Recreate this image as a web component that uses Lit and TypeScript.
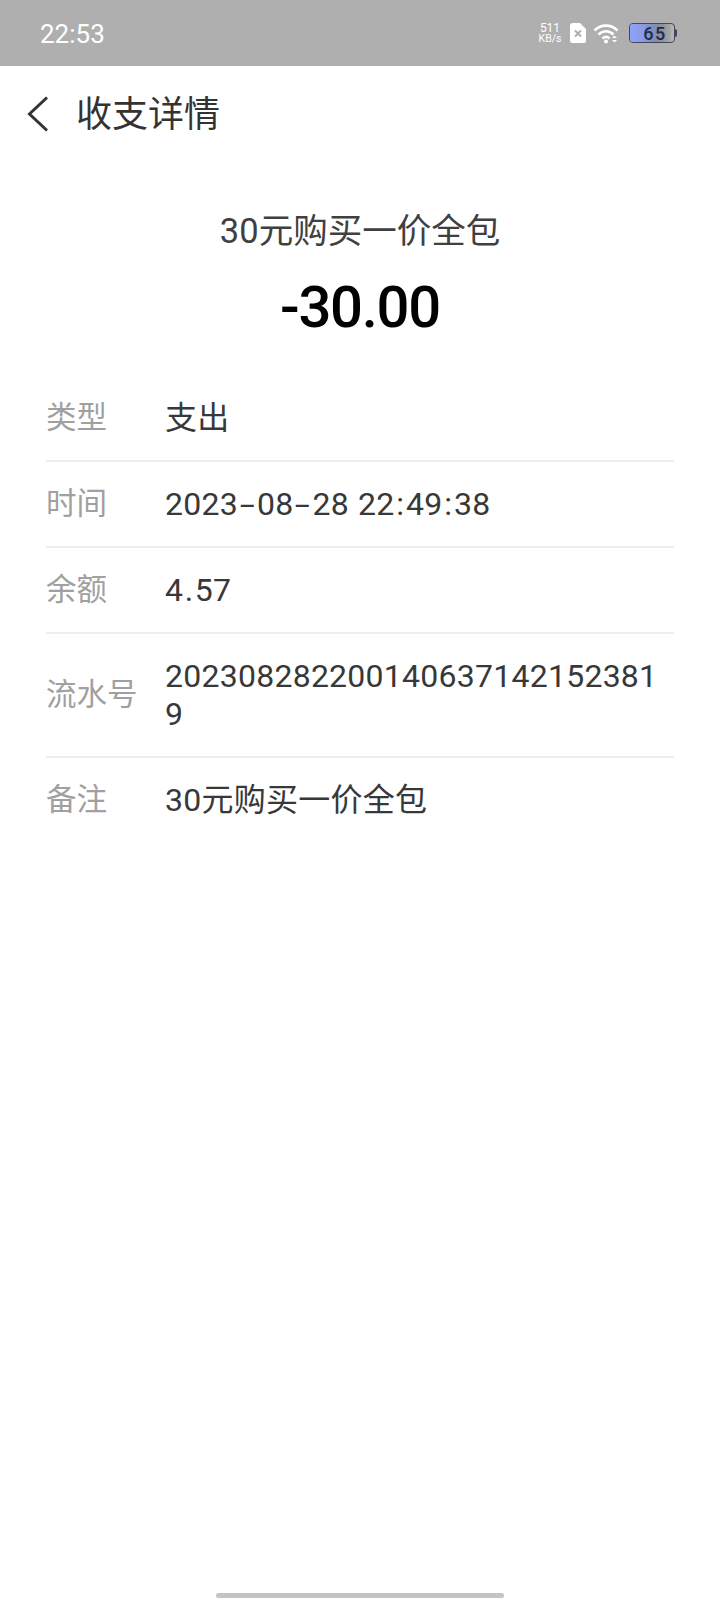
import { LitElement, css, html, svg } from 'lit'
import { customElement } from 'lit/decorators.js'

const rows = [
  { label: '类型', value: '支出' },
  { label: '时间', value: '2023-08-28 22:49:38' },
  { label: '余额', value: '4.57' },
  { label: '流水号', value: '2023082822001406371421523819' },
  { label: '备注', value: '30元购买一价全包' },
]

const wifi = svg`
  <path d="M1.5 8.5C8 2 18 2 24.5 8.5" />
  <path d="M5.5 12.5C10 8.2 16 8.2 20.5 12.5" />
  <path d="M9.5 16.5C11.8 14.4 14.2 14.4 16.5 16.5" />`

// the phone's font has much wider punctuation than Roboto
const spaced = (text: string) =>
  text.split(/([-:.])/).map(part => {
    if (part === '-') return html`<span class="dash">-</span>`
    if (part === ':' || part === '.') return html`<span class="punct">${part}</span>`
    return part
  })

@customElement('app-root')
export class AppRoot extends LitElement {
  render() {
    return html`
      <div class="status">
        <span class="clock">22:53</span>
        <div class="indicators">
          <div class="speed"><span>511</span><span class="unit">KB/s</span></div>
          <svg class="sim" width="16" height="20" viewBox="0 0 16 20">
            <path d="M2.5 0H10L16 6V17.5A2.5 2.5 0 0 1 13.5 20H2.5A2.5 2.5 0 0 1 0 17.5V2.5A2.5 2.5 0 0 1 2.5 0Z" fill="#fff" />
            <path d="M5 7.5L11 13.5M11 7.5L5 13.5" stroke="#afafaf" stroke-width="2" fill="none" />
          </svg>
          <svg class="wifi" width="26" height="22" viewBox="0 0 26 22">
            <g fill="none" stroke="#fff" stroke-width="2.6">${wifi}</g>
            <circle cx="13" cy="19.5" r="2" fill="#fff" />
            <path d="M19 16H24L21.5 13.5ZM19 18H24L21.5 20.5Z" fill="#fff" />
          </svg>
          <div class="battery">
            <div class="cell"><div class="fill"></div><span>65</span></div>
            <div class="nub"></div>
          </div>
        </div>
      </div>
      <div class="nav">
        <svg class="back" width="24" height="38" viewBox="0 0 24 38">
          <path d="M21 2.5L3.5 19L21 35.5" fill="none" stroke="#333" stroke-width="3" />
        </svg>
        <span class="nav-title">收支详情</span>
      </div>
      <div class="summary">
        <div class="name">30元购买一价全包</div>
        <div class="amount">-30.00</div>
      </div>
      <div class="list">
        ${rows.map(r => html`
          <div class="row">
            <div class="label">${r.label}</div>
            <div class="value">${spaced(r.value)}</div>
          </div>
        `)}
      </div>
      <div class="spacer"></div>
      <div class="home"><div class="home-bar"></div></div>
    `
  }

  static styles = css`
    :host {
      display: flex;
      flex-direction: column;
      width: 720px;
      height: 1600px;
      background: #fff;
      font-family: 'Roboto', 'Noto Sans CJK SC', sans-serif;
      color: #333;
    }
    .status {
      height: 66px;
      flex: none;
      box-sizing: border-box;
      padding: 0 43px 0 40px;
      background: #afafaf;
      display: flex;
      align-items: center;
      justify-content: space-between;
    }
    .clock {
      color: #fff;
      font-size: 26px;
      padding-top: 1px;
    }
    .indicators {
      display: flex;
      align-items: center;
    }
    .speed {
      display: flex;
      flex-direction: column;
      align-items: center;
      width: 26px;
      color: #fff;
      font-size: 12px;
      line-height: 12px;
      margin-right: 7px;
    }
    .unit {
      font-size: 10.5px;
      line-height: 10px;
    }
    .sim {
      margin-right: 7px;
    }
    .wifi {
      margin-right: 10px;
    }
    .battery {
      display: flex;
      align-items: center;
    }
    .cell {
      position: relative;
      box-sizing: border-box;
      width: 46px;
      height: 20px;
      border: 1.5px solid #43475a;
      border-radius: 4px;
      overflow: hidden;
      background: #b4b4b4;
      display: flex;
      align-items: center;
      justify-content: center;
    }
    .fill {
      position: absolute;
      left: 0;
      top: 0;
      bottom: 0;
      width: 93%;
      background: linear-gradient(90deg, #8ea2fa 0%, #8a9ce8 30%, #7f8dc0 55%, #8d8f98 75%, #a9a9a9 100%);
    }
    .cell span {
      position: relative;
      left: 3px;
      color: #1e2a4e;
      font-size: 18px;
      font-weight: 500;
      letter-spacing: 1.5px;
    }
    .nub {
      width: 2px;
      height: 8px;
      background: #43475a;
      border-radius: 0 2px 2px 0;
    }
    .nav {
      height: 94px;
      flex: none;
      display: flex;
      align-items: center;
      padding-left: 26px;
    }
    .back {
      margin-right: 26px;
      margin-top: 2px;
    }
    .nav-title {
      font-size: 36px;
      color: #333;
      margin-bottom: 4px;
    }
    .summary {
      display: flex;
      flex-direction: column;
      align-items: center;
      padding-top: 48px;
    }
    .name {
      font-size: 34.5px;
      line-height: 46px;
      color: #404040;
    }
    .amount {
      margin-top: 19px;
      font-size: 58px;
      line-height: 68px;
      font-weight: 500;
      color: #000;
      letter-spacing: -1.3px;
    }
    .list {
      margin: 35px 46px 0;
    }
    .row {
      display: flex;
      align-items: center;
      box-sizing: border-box;
      padding: 23px 0;
      border-bottom: 2px solid #eee;
      line-height: 38px;
      font-size: 32px;
    }
    .row:last-child {
      border-bottom: none;
    }
    .label {
      flex: none;
      width: 119px;
      font-size: 30.5px;
      color: #a0a0a0;
    }
    .value {
      flex: 1;
      color: #383838;
      padding-right: 14px;
      letter-spacing: 0.25px;
      word-break: break-all;
      word-spacing: 1px;
    }
    .dash {
      display: inline-block;
      width: 19px;
      text-align: center;
      transform: scaleX(1.7);
    }
    .punct {
      display: inline-block;
      width: 11.5px;
      text-align: center;
    }
    .spacer {
      flex: 1;
    }
    .home {
      height: 30px;
      flex: none;
      display: flex;
      justify-content: center;
    }
    .home-bar {
      width: 288px;
      height: 5px;
      margin-top: 23px;
      background: #c4c4c4;
      border-radius: 3px;
    }
  `
}

declare global {
  interface HTMLElementTagNameMap {
    'app-root': AppRoot
  }
}
